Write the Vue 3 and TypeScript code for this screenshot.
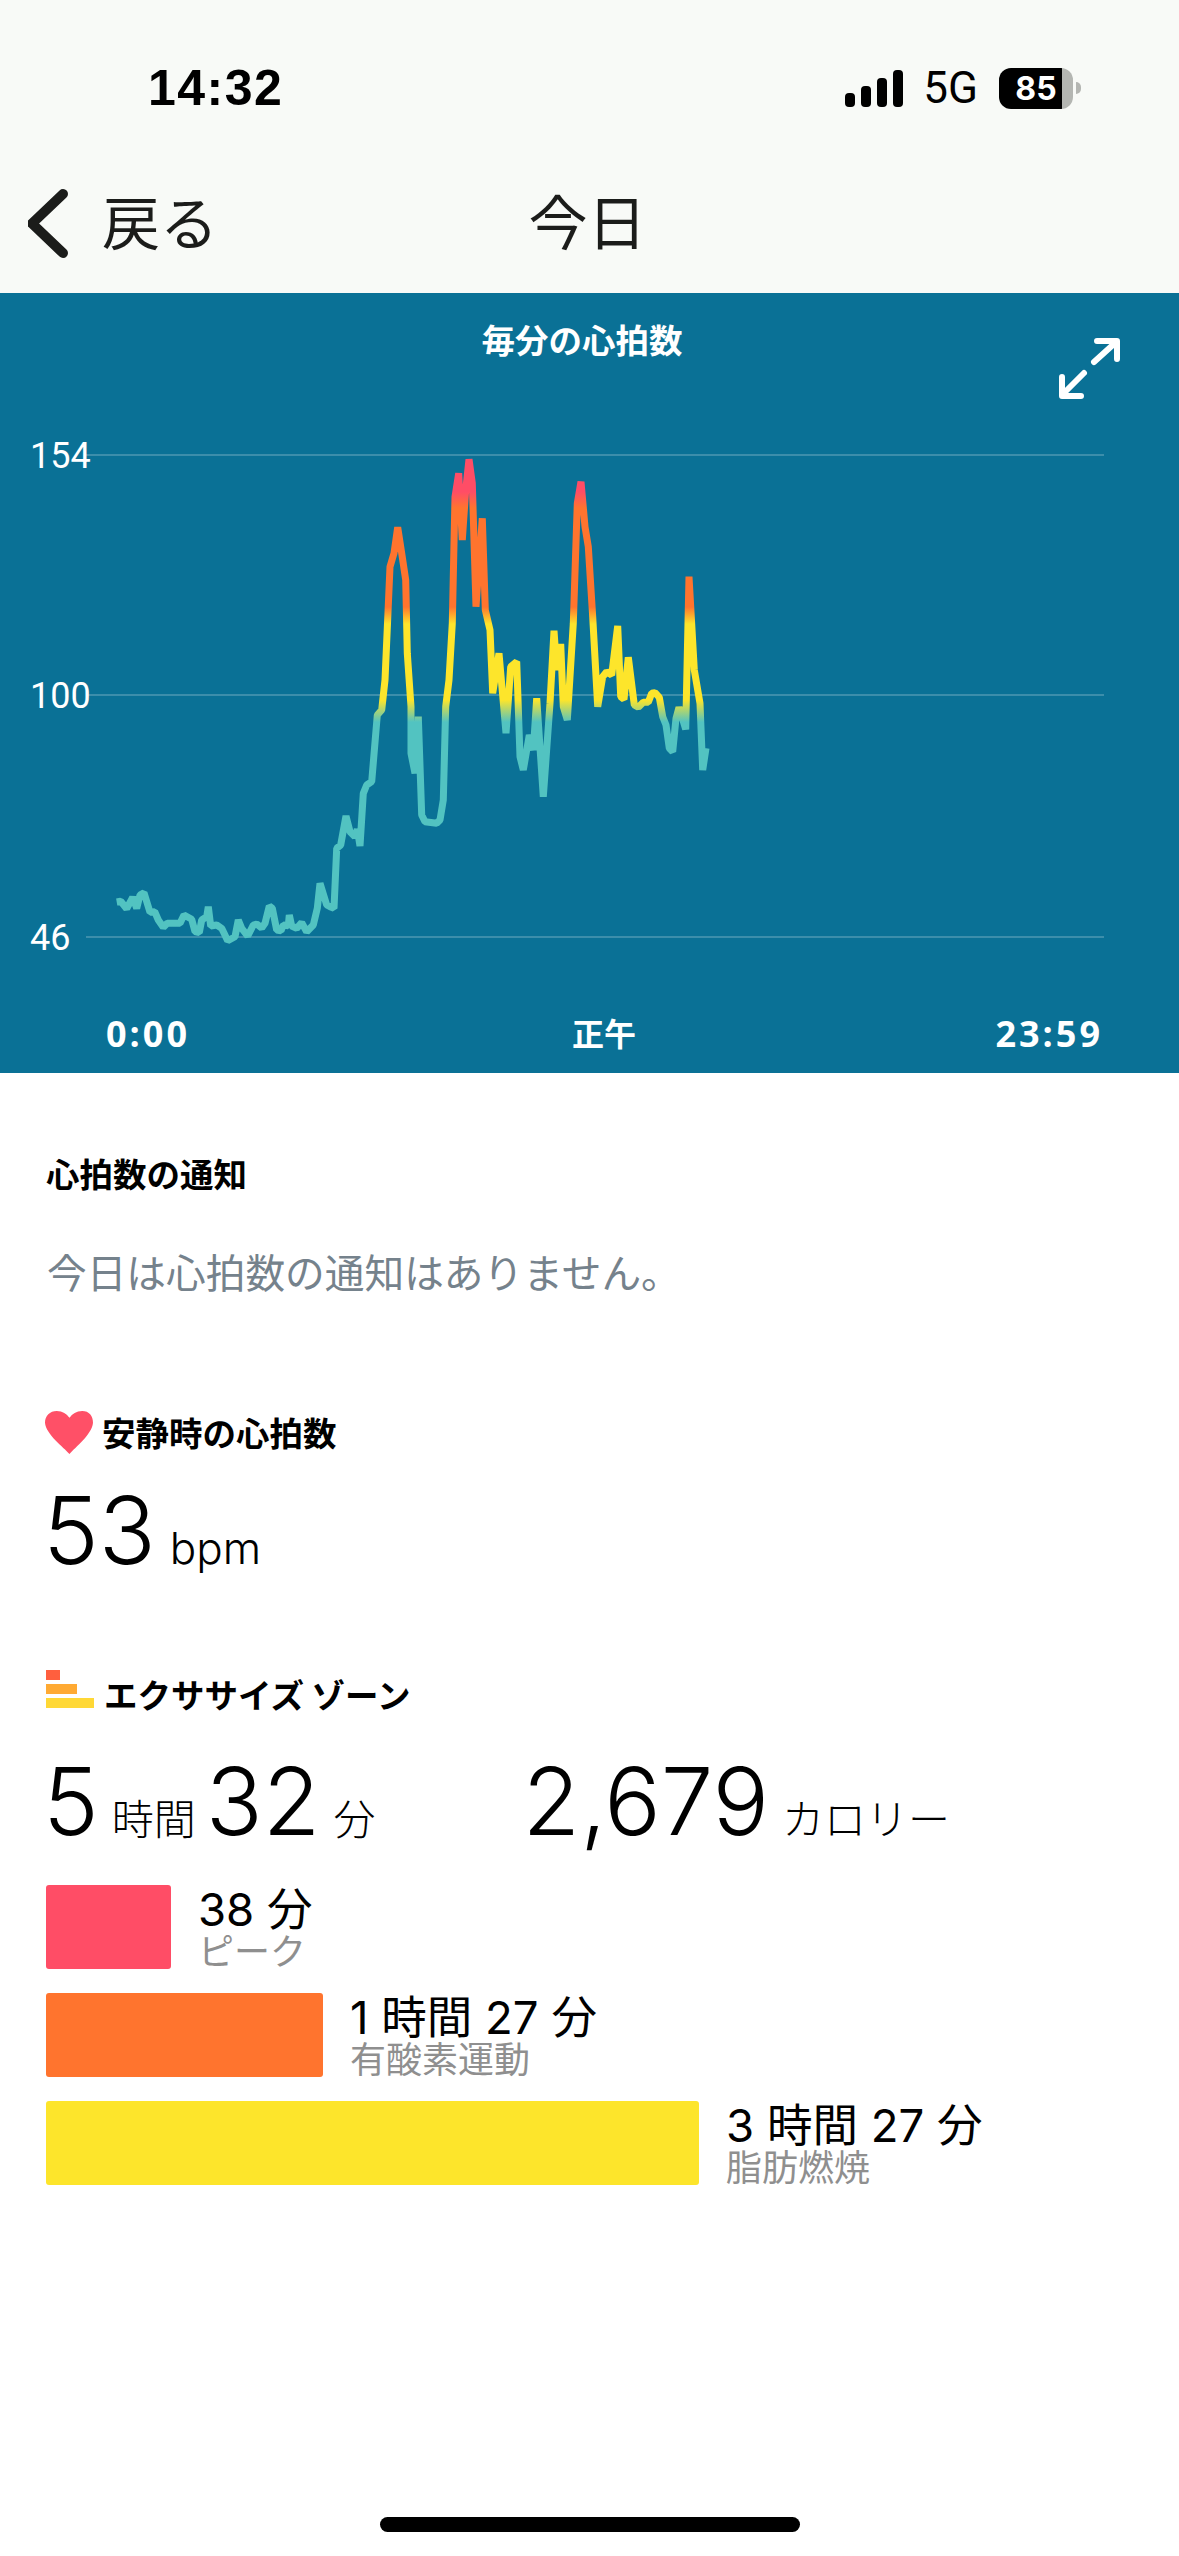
<template>
  <div class="screen">
    <!-- Status bar + nav -->
    <header class="top">
      <div class="status">
        <span class="clock">14:32</span>
        <div class="status-right">
          <svg class="signal" width="58" height="37" viewBox="0 0 58 37">
            <rect x="0" y="23" width="10" height="14" rx="4" />
            <rect x="16" y="16" width="10" height="21" rx="4" />
            <rect x="32" y="8" width="10" height="29" rx="4" />
            <rect x="48" y="0" width="10" height="37" rx="4" />
          </svg>
          <span class="network">5G</span>
          <div class="battery">
            <div class="battery-body"><span>85</span></div>
            <div class="battery-tip"></div>
          </div>
        </div>
      </div>
      <nav class="nav">
        <div class="back">
          <svg width="40" height="71" viewBox="0 0 40 71">
            <path d="M35 6 L4 35.5 L35 65" fill="none" stroke="#1b1c1a" stroke-width="10" stroke-linecap="round" stroke-linejoin="round" />
          </svg>
          <span>戻る</span>
        </div>
        <div class="title">今日</div>
        <div></div>
      </nav>
    </header>

    <!-- Heart rate chart -->
    <section class="chart">
      <svg width="1179" height="780" viewBox="0 293 1179 780">
        <defs>
          <linearGradient id="zones" gradientUnits="userSpaceOnUse" x1="0" y1="470" x2="0" y2="960">
            <stop v-for="s in stops" :key="s.y" :offset="(s.y - 470) / 490" :stop-color="s.color" />
          </linearGradient>
        </defs>
        <text class="chart-title" x="582" y="353" text-anchor="middle">毎分の心拍数</text>
        <g v-for="g in gridLines" :key="g.label">
          <line x1="86" x2="1104" :y1="g.y" :y2="g.y" class="grid" />
          <text class="axis" x="30" :y="g.y + 13">{{ g.label }}</text>
        </g>
        <path :d="linePath" class="hr-line" stroke="url(#zones)" />
        <text class="time" x="106" y="1047">0:00</text>
        <text class="time jp" x="604" y="1046" text-anchor="middle">正午</text>
        <text class="time" x="1103" y="1047" text-anchor="end">23:59</text>
        <g class="expand">
          <path d="M1094 362 L1115 343" />
          <path d="M1097 341 L1117 341 L1117 359" />
          <path d="M1063 394 L1084 373" />
          <path d="M1062 377 L1062 396 L1081 396" />
        </g>
      </svg>
    </section>

    <main class="body">
      <h2 class="heading first">心拍数の通知</h2>
      <p class="empty">今日は心拍数の通知はありません。</p>

      <div class="heading-row rest">
        <svg width="48" height="43" viewBox="0 0 49 44" preserveAspectRatio="none">
          <path d="M25 44 C19 37 1 24 0 12 C0 5 5 0 12 0 C18 0 22 3 25 7 C28 3 32 0 38 0 C45 0 49 5 49 12 C48 24 31 37 25 44 Z" fill="#ff5067" />
        </svg>
        <h2 class="heading">安静時の心拍数</h2>
      </div>
      <div class="stat bpm">
        <span class="num">53</span><span class="unit latin">bpm</span>
      </div>

      <div class="heading-row zone-head">
        <div class="zone-icon">
          <i class="z1"></i>
          <i class="z2"></i>
          <i class="z3"></i>
        </div>
        <h2 class="heading">エクササイズ ゾーン</h2>
      </div>
      <div class="totals">
        <div class="stat">
          <span class="num">5</span><span class="unit">時間</span><span class="num">32</span><span class="unit">分</span>
        </div>
        <div class="stat">
          <span class="num">2,679</span><span class="unit">カロリー</span>
        </div>
      </div>

      <div class="zones">
        <div v-for="z in zones" :key="z.label" class="zone">
          <div class="bar" :style="{ width: z.width + 'px', background: z.color }"></div>
          <div>
            <div class="zone-value">{{ z.value }}</div>
            <div class="zone-label">{{ z.label }}</div>
          </div>
        </div>
      </div>
    </main>

    <div class="home-bar"></div>
  </div>
</template>

<script setup lang="ts">
import { computed } from 'vue';

type Pt = [number, number];

// samples read off the chart, early morning part then the active part
const morning: Pt[] = [
  [110, 366], [122, 364], [140, 386], [158, 352], [170, 385], [180, 345], [192, 338], [210, 397],
  [224, 395], [235, 420], [250, 442], [262, 430], [300, 430], [312, 405], [335, 418], [345, 455],
  [358, 458], [365, 420], [380, 410], [385, 380], [392, 438], [410, 435], [425, 445], [443, 482],
  [465, 470], [475, 420], [485, 445], [503, 468], [520, 435], [530, 432], [545, 444], [555, 430],
  [568, 378], [577, 385], [590, 450], [603, 452], [610, 435], [625, 437], [628, 405], [635, 438],
  [650, 445], [665, 428], [680, 455], [700, 435], [712, 385], [720, 310], [740, 375], [750, 380],
  [762, 385], [770, 205], [782, 195], [798, 108], [810, 155], [825, 170], [832, 148], [840, 198],
  [850, 40], [860, 15],
];
const daytime: Pt[] = [
  [215, 1085], [232, 885], [245, 870], [255, 780], [270, 440], [282, 400], [293, 322], [305, 400],
  [317, 480], [322, 700], [333, 860], [333, 1000], [345, 1060], [355, 890], [365, 1185], [375, 1205],
  [410, 1210], [420, 1200], [430, 1140], [437, 860], [447, 780], [457, 610], [465, 230], [476, 160],
  [487, 360], [497, 210], [507, 118], [517, 190], [528, 560], [547, 295], [556, 570], [570, 630],
  [578, 820], [597, 700], [618, 940], [632, 740], [650, 725], [660, 1010], [670, 1050], [688, 945],
  [700, 990], [710, 835], [730, 1130], [750, 850], [762, 632], [770, 750], [782, 672], [790, 860],
  [802, 900], [820, 610], [832, 250], [843, 185], [855, 320], [865, 380], [878, 590], [893, 860],
  [908, 770], [920, 755], [935, 765], [953, 618], [962, 830], [972, 838], [985, 712], [1003, 855],
  [1015, 862], [1030, 847], [1045, 847], [1055, 820], [1065, 818], [1078, 832], [1088, 890], [1098, 915],
  [1108, 985], [1118, 995], [1128, 895], [1137, 862], [1157, 928], [1167, 470], [1183, 750], [1200, 850],
  [1208, 1050], [1218, 985],
];

const linePath = computed(() => {
  const pts = [
    ...morning.map(([x, y]) => [80 + x / 3, 780 + y / 3]),
    ...daytime.map(([x, y]) => [300 + x / 3, 420 + y / 3]),
  ];
  return pts.map(([x, y], i) => `${i ? 'L' : 'M'}${x.toFixed(1)} ${y.toFixed(1)}`).join(' ');
});

const stops = [
  { y: 470, color: '#ff4d66' },
  { y: 492, color: '#ff4d66' },
  { y: 508, color: '#ff742e' },
  { y: 607, color: '#ff742e' },
  { y: 624, color: '#fde52b' },
  { y: 700, color: '#fde52b' },
  { y: 722, color: '#52c3c1' },
  { y: 960, color: '#52c3c1' },
];

const gridLines = [
  { label: '154', y: 455 },
  { label: '100', y: 695 },
  { label: '46', y: 937 },
];

const zones = [
  { value: '38 分', label: 'ピーク', width: 125, color: '#ff4d66' },
  { value: '1 時間 27 分', label: '有酸素運動', width: 277, color: '#ff742e' },
  { value: '3 時間 27 分', label: '脂肪燃焼', width: 653, color: '#fde52b' },
];
</script>

<style>
body {
  background: #fff;
}
</style>

<style scoped>
.screen {
  width: 1179px;
  height: 2556px;
  position: relative;
  overflow: hidden;
  background: #fff;
  color: #000;
  font-family: Roboto, "Noto Sans CJK JP", sans-serif;
}

.top {
  background: #f8faf7;
}

.status {
  height: 150px;
  padding: 26px 98px 0 148px;
  box-sizing: border-box;
  display: flex;
  justify-content: space-between;
  align-items: center;
}

.clock {
  font: 700 50px "Liberation Sans", sans-serif;
  letter-spacing: 1.5px;
}

.status-right {
  display: flex;
  align-items: center;
}

.network {
  font: 400 44px Roboto, sans-serif;
  margin-left: 20px;
}

.battery {
  display: flex;
  align-items: center;
  margin-left: 21px;
}

.battery-body {
  width: 74px;
  height: 41px;
  border-radius: 12px;
  background: linear-gradient(to right, #000 85%, #b4b6b2 85%);
  color: #fff;
  font: 700 32px/41px Inter, sans-serif;
  text-align: center;
}

.battery-tip {
  width: 5px;
  height: 12px;
  margin-left: 3px;
  border-radius: 0 6px 6px 0;
  background: #b4b6b2;
}

.nav {
  height: 143px;
  box-sizing: border-box;
  display: grid;
  grid-template-columns: 1fr auto 1fr;
  align-items: center;
  padding: 0 32px 4px 28px;
  color: #1b1c1a;
  font-family: "Noto Sans CJK JP", sans-serif;
  font-size: 58px;
  font-weight: 400;
}

.back {
  display: flex;
  align-items: center;
  gap: 34px;
}

.back svg {
  margin-top: 8px;
}

.title {
  font-size: 59px;
}

.chart {
  height: 780px;
  background: #0a7196;
}

.chart svg {
  display: block;
}

.chart-title {
  fill: #fff;
  font: 700 33.5px "Noto Sans CJK JP", sans-serif;
}

.grid {
  stroke: #ffffff;
  stroke-opacity: 0.28;
  stroke-width: 1.5;
}

.axis {
  fill: #fff;
  font: 400 36px Roboto, sans-serif;
}

.time {
  fill: #fff;
  font: 700 36px "Open Sans", sans-serif;
  letter-spacing: 3px;
}

.time.jp {
  font: 700 32px "Noto Sans CJK JP", sans-serif;
  letter-spacing: 0;
}

.hr-line {
  fill: none;
  stroke-width: 7;
  stroke-linejoin: bevel;
}

.expand path {
  fill: none;
  stroke: #fff;
  stroke-width: 6;
  stroke-linecap: round;
  stroke-linejoin: round;
}

.body {
  padding: 78px 46px 0;
}

.heading {
  margin: 0;
  font: 700 33.5px/44px "Noto Sans CJK JP", sans-serif;
}

.empty {
  margin: 51px 0 0 1px;
  color: #75828c;
  font: 400 39.7px/50px "Noto Sans CJK JP", sans-serif;
}

.heading-row {
  display: flex;
  align-items: center;
}

.heading-row.rest {
  margin-top: 114px;
  gap: 9px;
  margin-left: -1px;
}

.stat {
  display: flex;
  align-items: baseline;
  font-family: Inter, "Noto Sans CJK JP", sans-serif;
}

.num {
  font-size: 94px;
  font-weight: 300;
  line-height: 112px;
}

.unit {
  font-size: 42px;
  font-weight: 300;
  margin: 0 10px 0 13px;
}

.unit.latin {
  font-size: 44px;
  margin: 0 0 0 14px;
}

.bpm {
  margin-top: 20px;
  margin-left: -3px;
}

.heading-row.zone-head {
  margin-top: 86px;
  gap: 10px;
}

.zone-icon {
  display: flex;
  flex-direction: column;
  gap: 4px;
  margin-top: -10px;
}

.zone-icon i {
  display: block;
  height: 10px;
}

.z1 {
  width: 14px;
  background: #ff5f3e;
}

.z2 {
  width: 31px;
  background: #ffaa33;
}

.z3 {
  width: 48px;
  background: #ffd836;
}

.totals {
  display: flex;
  gap: 137px;
  margin: 29px 0 0 -3px;
}

.zones {
  display: flex;
  flex-direction: column;
  gap: 24px;
  margin-top: 28px;
}

.zone {
  display: flex;
  align-items: center;
  gap: 27px;
}

.bar {
  height: 84px;
  border-radius: 3px;
}

.zone-value {
  font-family: Inter, "Noto Sans CJK JP", sans-serif;
  font-size: 45.5px;
  line-height: 44px;
  font-weight: 400;
}

.zone-label {
  color: #8f8f8f;
  font: 400 36px/35px "Noto Sans CJK JP", sans-serif;
}

.home-bar {
  position: absolute;
  left: 380px;
  top: 2517px;
  width: 420px;
  height: 15px;
  border-radius: 8px;
  background: #000;
}
</style>
